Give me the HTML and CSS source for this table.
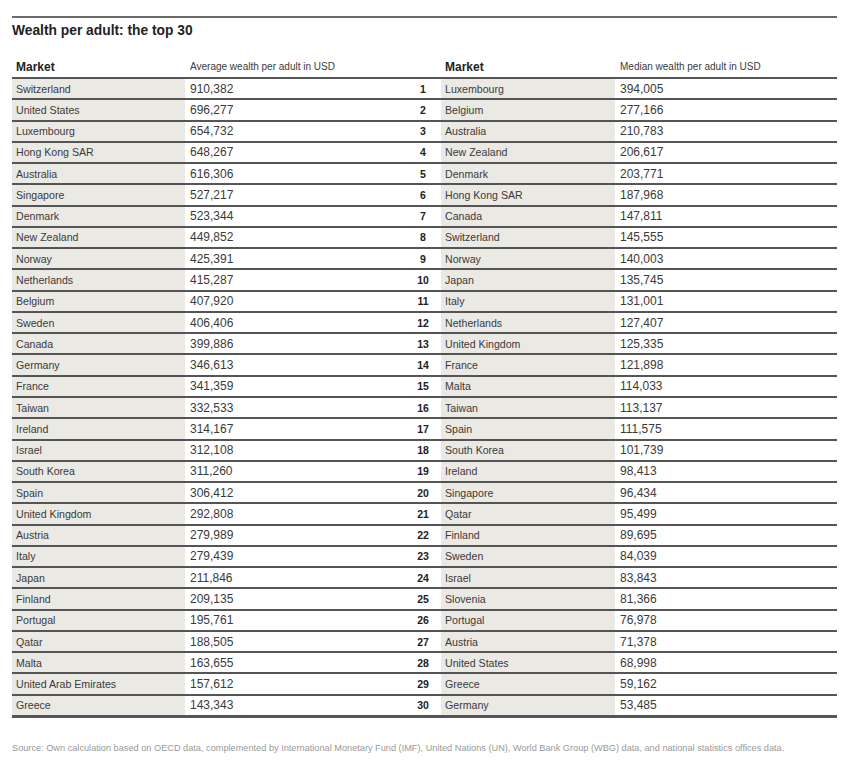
FILE: index.html
```html
<!DOCTYPE html>
<html lang="en">
  <head>
    <meta charset="UTF-8" />
    <meta name="viewport" content="width=device-width, initial-scale=1.0" />
    <title>Wealth per adult: the top 30</title>
    <link rel="stylesheet" href="styles.css">
  </head>
  <body>
    <div class="page">
      <h1 class="title">Wealth per adult: the top 30</h1>

      <div class="ranking">
        <div class="row head">
          <div class="cell name">Market</div>
          <div class="cell value">Average wealth per adult in USD</div>
          <div class="cell rank"></div>
          <div class="cell name">Market</div>
          <div class="cell value">Median wealth per adult in USD</div>
        </div>
        <div id="rows"></div>
      </div>

      <p class="source">Source: Own calculation based on OECD data, complemented by International Monetary Fund (IMF), United Nations (UN), World Bank Group (WBG) data, and national statistics offices data.</p>
    </div>

    <script>
      // Average (left) and median (right) wealth per adult, ranked
      const average = [
        ["Switzerland", "910,382"], ["United States", "696,277"], ["Luxembourg", "654,732"],
        ["Hong Kong SAR", "648,267"], ["Australia", "616,306"], ["Singapore", "527,217"],
        ["Denmark", "523,344"], ["New Zealand", "449,852"], ["Norway", "425,391"],
        ["Netherlands", "415,287"], ["Belgium", "407,920"], ["Sweden", "406,406"],
        ["Canada", "399,886"], ["Germany", "346,613"], ["France", "341,359"],
        ["Taiwan", "332,533"], ["Ireland", "314,167"], ["Israel", "312,108"],
        ["South Korea", "311,260"], ["Spain", "306,412"], ["United Kingdom", "292,808"],
        ["Austria", "279,989"], ["Italy", "279,439"], ["Japan", "211,846"],
        ["Finland", "209,135"], ["Portugal", "195,761"], ["Qatar", "188,505"],
        ["Malta", "163,655"], ["United Arab Emirates", "157,612"], ["Greece", "143,343"]
      ];
      const median = [
        ["Luxembourg", "394,005"], ["Belgium", "277,166"], ["Australia", "210,783"],
        ["New Zealand", "206,617"], ["Denmark", "203,771"], ["Hong Kong SAR", "187,968"],
        ["Canada", "147,811"], ["Switzerland", "145,555"], ["Norway", "140,003"],
        ["Japan", "135,745"], ["Italy", "131,001"], ["Netherlands", "127,407"],
        ["United Kingdom", "125,335"], ["France", "121,898"], ["Malta", "114,033"],
        ["Taiwan", "113,137"], ["Spain", "111,575"], ["South Korea", "101,739"],
        ["Ireland", "98,413"], ["Singapore", "96,434"], ["Qatar", "95,499"],
        ["Finland", "89,695"], ["Sweden", "84,039"], ["Israel", "83,843"],
        ["Slovenia", "81,366"], ["Portugal", "76,978"], ["Austria", "71,378"],
        ["United States", "68,998"], ["Greece", "59,162"], ["Germany", "53,485"]
      ];

      const rows = document.getElementById("rows");
      average.forEach((avg, i) => {
        const med = median[i];
        const row = document.createElement("div");
        row.classList.add("row");
        row.innerHTML = `
          <div class="cell name shaded">${avg[0]}</div>
          <div class="cell value">${avg[1]}</div>
          <div class="cell rank">${i + 1}</div>
          <div class="cell name shaded">${med[0]}</div>
          <div class="cell value">${med[1]}</div>
        `;
        rows.appendChild(row);
      });
    </script>
  </body>
</html>
```

FILE: styles.css
```css
body {
  margin: 0;
  background-color: #fff;
  color: #3a3a3a;
  font-family: "Liberation Sans", Arial, sans-serif;
}

.page {
  width: 825px;
  margin: 16px 0 0 12px;
  border-top: 2px solid #6a6a6a;
}

.title {
  margin: 5px 0 0;
  font-size: 13.8px;
  line-height: 16px;
  font-weight: bold;
  color: #222;
}

.ranking {
  margin-top: 17px;
  border-bottom: 1px solid #555;
}

.row {
  display: grid;
  grid-template-columns: 173px 220px 36px 174px 222px;
  height: 21.27px;
  box-sizing: border-box;
  border-bottom: 2px solid #555;
}

.row.head {
  height: 23px;
}

.cell {
  display: flex;
  align-items: center;
  white-space: nowrap;
}

.name {
  padding-left: 4px;
  font-size: 10.6px;
}

.value {
  padding-left: 5px;
  font-size: 12px;
}

.rank {
  justify-content: center;
  font-size: 10.5px;
  font-weight: bold;
  color: #222;
}

.shaded {
  background-color: #ebe9e4;
}

.head .name {
  font-size: 12px;
  font-weight: bold;
  color: #222;
}

.head .value {
  font-size: 10px;
}

.source {
  margin: 24px 0 0;
  font-size: 9.2px;
  line-height: 12px;
  color: #999;
  white-space: nowrap;
}
```
